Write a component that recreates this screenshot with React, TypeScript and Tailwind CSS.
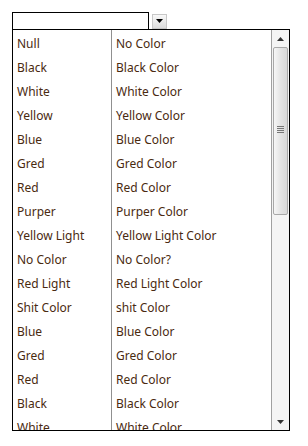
import React from "react";

const rows: [string, string][] = [
  ["Null", "No Color"],
  ["Black", "Black Color"],
  ["White", "White Color"],
  ["Yellow", "Yellow Color"],
  ["Blue", "Blue Color"],
  ["Gred", "Gred Color"],
  ["Red", "Red Color"],
  ["Purper", "Purper Color"],
  ["Yellow Light", "Yellow Light Color"],
  ["No Color", "No Color?"],
  ["Red Light", "Red Light Color"],
  ["Shit Color", "shit Color"],
  ["Blue", "Blue Color"],
  ["Gred", "Gred Color"],
  ["Red", "Red Color"],
  ["Black", "Black Color"],
  ["White", "White Color"],
];

export default function App() {
  return (
    <div className="w-[308px] h-[446px] bg-white pt-[12px] pl-[12px] font-['Noto_Sans',sans-serif] text-[12px] text-[#4a2a10]">
      <div className="flex items-center">
        <div className="w-[137px] h-[18px] border border-black bg-white" />
        <div className="ml-[3px] w-[15px] h-[15px] flex items-center justify-center bg-gradient-to-b from-[#f8f8f8] to-[#dcdcdc] border border-[#c8c8c8]">
          <svg width="7" height="4" viewBox="0 0 7 4">
            <path d="M0 0h7L3.5 4z" fill="#000" />
          </svg>
        </div>
      </div>
      <div className="w-[278px] h-[402px] -mt-px border border-black flex overflow-hidden">
        <div className="flex-1 overflow-hidden">
          {rows.map(([a, b], i) => (
            <div key={i} className="flex h-[24px] items-center leading-none">
              <div className="w-[99px] h-full flex items-center pl-[4px] pt-[3px] border-r border-[#909090]">{a}</div>
              <div className="flex-1 h-full flex items-center pl-[4px] pt-[3px]">{b}</div>
            </div>
          ))}
        </div>
        <div className="w-[18px] flex flex-col bg-[#f4f4f4] border-l border-[#a0a0a0]">
          <div className="h-[17px] flex items-center justify-center">
            <svg width="7" height="4" viewBox="0 0 7 4">
              <path d="M0 4h7L3.5 0z" fill="#333" />
            </svg>
          </div>
          <div className="mx-[1px] h-[168px] border border-[#a8a8a8] rounded-[2px] bg-gradient-to-r from-[#f6f6f6] via-[#e4e4e4] to-[#d8d8d8] flex items-center justify-center">
            <div className="flex flex-col gap-[1px] -mt-[4px]">
              <div className="w-[7px] h-[1px] bg-[#777]" />
              <div className="w-[7px] h-[1px] bg-[#777]" />
              <div className="w-[7px] h-[1px] bg-[#777]" />
              <div className="w-[7px] h-[1px] bg-[#777]" />
            </div>
          </div>
          <div className="flex-1" />
          <div className="h-[17px] flex items-center justify-center">
            <svg width="7" height="4" viewBox="0 0 7 4">
              <path d="M0 0h7L3.5 4z" fill="#333" />
            </svg>
          </div>
        </div>
      </div>
    </div>
  );
}
